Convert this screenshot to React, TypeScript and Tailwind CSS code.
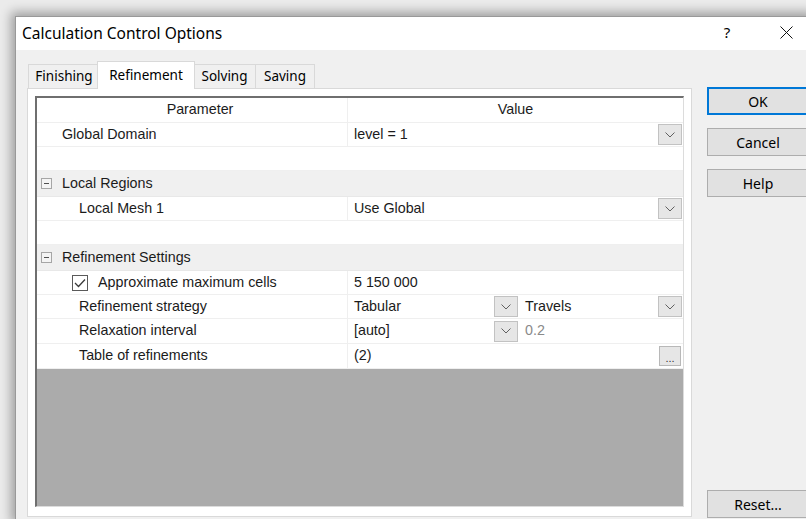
import React from "react";

const ui = "font-['Noto_Sans','Open_Sans',sans-serif]";
const gridFont = "font-['Liberation_Sans',Arial,sans-serif] text-[14.3px] text-[#1b1b1b]";

function Chevron() {
  return (
    <svg width="10" height="6" viewBox="0 0 10 6">
      <path d="M0.5 0.5 L5 5 L9.5 0.5" fill="none" stroke="#606060" strokeWidth="1" />
    </svg>
  );
}

function DropBtn() {
  return (
    <div className="w-[24px] h-[21px] shrink-0 bg-[#e6e6e6] border border-[#c2c2c2] flex items-center justify-center">
      <Chevron />
    </div>
  );
}

function MinusBox() {
  return (
    <div className="w-[11px] h-[11px] shrink-0 border border-[#a6a6a6] bg-[#f4f4f4] flex items-center justify-center">
      <div className="w-[5px] h-px bg-[#505050]" />
    </div>
  );
}

function CheckBox() {
  return (
    <div className="w-[16px] h-[16px] shrink-0 border border-[#5a5a5a] bg-white flex items-center justify-center">
      <svg width="12" height="10" viewBox="0 0 12 10">
        <path d="M1 5 L4.5 8.5 L11 1.5" fill="none" stroke="#3a3a3a" strokeWidth="1.3" />
      </svg>
    </div>
  );
}

function Row({
  h,
  left,
  right,
}: {
  h: string;
  left: React.ReactNode;
  right?: React.ReactNode;
}) {
  return (
    <div className={`flex shrink-0 bg-white border-b border-[#efefef] ${h}`}>
      <div className="w-[311px] shrink-0 border-r border-[#efefef] flex items-center">{left}</div>
      <div className="flex-1 flex items-center min-w-0">{right}</div>
    </div>
  );
}

function GroupRow({ h, label }: { h: string; label: string }) {
  return (
    <div className={`flex items-center shrink-0 bg-[#f0f0f0] border-b border-[#e8e8e8] pl-[4px] gap-[10px] ${h}`}>
      <MinusBox />
      <span>{label}</span>
    </div>
  );
}

function EmptyRow({ h }: { h: string }) {
  return <div className={`shrink-0 bg-white border-b border-[#efefef] ${h}`} />;
}

function Tab({ label, w, last }: { label: string; w: string; last?: boolean }) {
  return (
    <div
      className={`h-[24px] ${w} bg-[#f0f0f0] border-t border-l border-[#d9d9d9] ${
        last ? "border-r" : ""
      } flex items-center justify-center text-[13.5px] text-black`}
    >
      {label}
    </div>
  );
}

function Button({ label, primary }: { label: string; primary?: boolean }) {
  return (
    <div
      className={`h-[28px] shrink-0 bg-[#e1e1e1] flex items-center justify-center text-[14px] text-black ${
        primary ? "border-2 border-[#0078d7]" : "border border-[#adadad]"
      }`}
    >
      {label}
    </div>
  );
}

export default function App() {
  return (
    <div className={`w-[806px] h-[519px] overflow-hidden bg-[#ebebeb] ${ui}`}>
      <div className="ml-[15px] mt-[16px] w-[795px] h-[503px] flex flex-col bg-[#f0f0f0] border-l border-t border-[#999999] shadow-[0_0_10px_4px_rgba(0,0,0,0.32)]">
        {/* title bar */}
        <div className="h-[33px] shrink-0 bg-white flex items-center pl-[6px]">
          <span className="text-[15.5px] text-black">Calculation Control Options</span>
          <div className="ml-auto flex items-center h-full">
            <div className="w-[46px] h-full flex items-center justify-center text-[15px] text-black mr-[13px] pb-[2px]">?</div>
            <div className="w-[46px] h-full flex items-center justify-center mr-[1px] pb-[2px]">
              <svg width="13" height="13" viewBox="0 0 13 13">
                <path d="M0.5 0.5 L12.5 12.5 M12.5 0.5 L0.5 12.5" stroke="#111" strokeWidth="1" />
              </svg>
            </div>
          </div>
        </div>

        {/* dialog body */}
        <div className="flex-1 flex pl-[11px] pt-[11px] min-h-0">
          <div className="w-[665px] shrink-0 flex flex-col">
            {/* tabs */}
            <div className="h-[27px] shrink-0 flex items-end pl-[1px] relative z-10">
              <Tab label="Finishing" w="w-[71px]" />
              <div className="h-[28px] w-[98px] -mx-[2px] mb-[-1px] bg-white border-t border-l border-r border-[#d9d9d9] flex items-center justify-center text-[13.5px] text-black relative z-10">
                Refinement
              </div>
              <Tab label="Solving" w="w-[62px]" />
              <Tab label="Saving" w="w-[60px]" last />
            </div>

            {/* tab page */}
            <div className="flex-1 mb-[2px] bg-white border border-[#d9d9d9] p-[7px] pb-[9px] flex min-h-0">
              <div
                className={`flex-1 flex flex-col border-t-2 border-l-2 border-t-[#6f6f6f] border-l-[#6f6f6f] border-r border-b border-r-[#dcdcdc] border-b-[#dcdcdc] ${gridFont}`}
              >
                {/* header */}
                <div className="h-[25px] shrink-0 flex bg-white border-b border-[#efefef]">
                  <div className="w-[311px] shrink-0 border-r border-[#efefef] flex items-center justify-center pl-[16px]">
                    Parameter
                  </div>
                  <div className="flex-1 flex items-center justify-center">Value</div>
                </div>

                <Row
                  h="h-[24px]"
                  left={<span className="pl-[25px]">Global Domain</span>}
                  right={
                    <div className="flex-1 flex items-center justify-between pl-[6px] pr-[1px]">
                      <span>level = 1</span>
                      <DropBtn />
                    </div>
                  }
                />
                <EmptyRow h="h-[24px]" />

                <GroupRow h="h-[26px]" label="Local Regions" />
                <Row
                  h="h-[24px]"
                  left={<span className="pl-[42px]">Local Mesh 1</span>}
                  right={
                    <div className="flex-1 flex items-center justify-between pl-[6px] pr-[1px]">
                      <span>Use Global</span>
                      <DropBtn />
                    </div>
                  }
                />
                <EmptyRow h="h-[24px]" />

                <GroupRow h="h-[26px]" label="Refinement Settings" />
                <Row
                  h="h-[24px]"
                  left={
                    <div className="pl-[35px] flex items-center gap-[10px]">
                      <CheckBox />
                      <span>Approximate maximum cells</span>
                    </div>
                  }
                  right={<span className="pl-[6px]">5 150 000</span>}
                />
                <Row
                  h="h-[24px]"
                  left={<span className="pl-[42px]">Refinement strategy</span>}
                  right={
                    <div className="flex-1 flex items-center">
                      <div className="w-[170px] shrink-0 flex items-center justify-between pl-[6px]">
                        <span>Tabular</span>
                        <DropBtn />
                      </div>
                      <div className="flex-1 flex items-center justify-between pl-[7px] pr-[1px]">
                        <span>Travels</span>
                        <DropBtn />
                      </div>
                    </div>
                  }
                />
                <Row
                  h="h-[25px]"
                  left={<span className="pl-[42px]">Relaxation interval</span>}
                  right={
                    <div className="flex-1 flex items-center">
                      <div className="w-[170px] shrink-0 flex items-center justify-between pl-[6px]">
                        <span>[auto]</span>
                        <DropBtn />
                      </div>
                      <span className="pl-[7px] text-[#8a8a8a]">0.2</span>
                    </div>
                  }
                />
                <Row
                  h="h-[25px]"
                  left={<span className="pl-[42px]">Table of refinements</span>}
                  right={
                    <div className="flex-1 flex items-center justify-between pl-[6px] pr-[2px]">
                      <span>(2)</span>
                      <div className="w-[22px] h-[20px] bg-[#e6e6e6] border border-[#b8b8b8] flex items-end justify-center text-[11px] leading-[14px] text-[#333]">
                        ...
                      </div>
                    </div>
                  }
                />

                {/* empty space below the rows */}
                <div className="flex-1 bg-[#ababab]" />
              </div>
            </div>
          </div>

          {/* buttons */}
          <div className="w-[102px] shrink-0 ml-[15px] pt-[26px] pb-[1px] flex flex-col gap-[13px]">
            <Button label="OK" primary />
            <Button label="Cancel" />
            <Button label="Help" />
            <div className="mt-auto">
              <Button label="Reset..." />
            </div>
          </div>
        </div>
      </div>
    </div>
  );
}
